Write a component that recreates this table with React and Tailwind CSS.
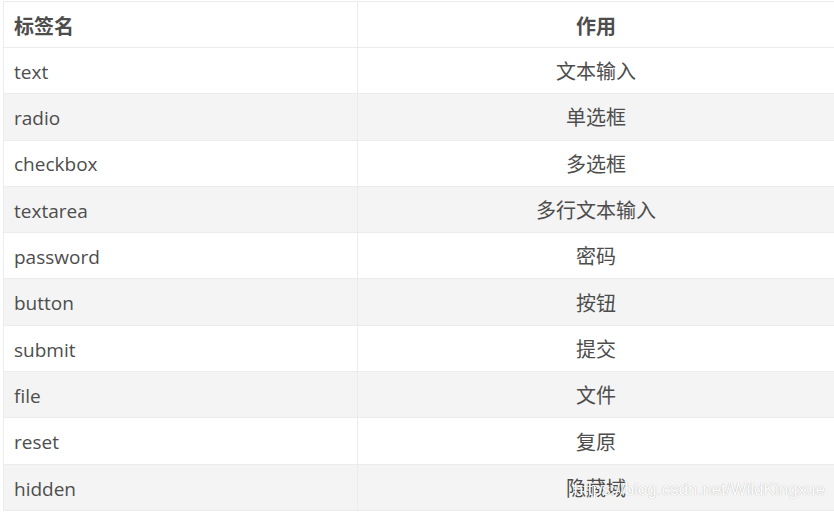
import React from "react";

const rows = [
  ["text", "文本输入"],
  ["radio", "单选框"],
  ["checkbox", "多选框"],
  ["textarea", "多行文本输入"],
  ["password", "密码"],
  ["button", "按钮"],
  ["submit", "提交"],
  ["file", "文件"],
  ["reset", "复原"],
  ["hidden", "隐藏域"],
];

const App = () => {
  return (
    <div
      className="relative w-[834px] h-[513px] overflow-hidden bg-white text-[#4d4d4d]"
      style={{ fontFamily: '"Open Sans", "Noto Sans CJK SC", sans-serif' }}
    >
      <table className="ml-[3px] mt-[1px] w-[832px] border-collapse text-[19px]">
        <thead>
          <tr className="h-[46px]">
            <th className="w-[354px] border border-[#ececec] px-[10px] pt-[4px] text-left font-bold text-[20px]">标签名</th>
            <th className="border border-[#ececec] px-[10px] pt-[4px] text-center font-bold text-[20px]">作用</th>
          </tr>
        </thead>
        <tbody>
          {rows.map(([tag, use], i) => (
            <tr key={tag} className={`h-[46.3px] ${i % 2 === 1 ? "bg-[#f4f4f4]" : "bg-white"}`}>
              <td className="border border-[#ececec] px-[10px] pt-[3px] text-left">{tag}</td>
              <td className="border border-[#ececec] px-[10px] pt-[3px] text-center text-[20px]">{use}</td>
            </tr>
          ))}
        </tbody>
      </table>
      <div
        className="absolute right-[9px] top-[477px] text-[17px] text-white"
        style={{ fontFamily: '"Liberation Sans", sans-serif', textShadow: "0 0 1px rgba(0,0,0,0.35)" }}
      >
        https://blog.csdn.net/WildKingxue
      </div>
    </div>
  );
};

export default App;
